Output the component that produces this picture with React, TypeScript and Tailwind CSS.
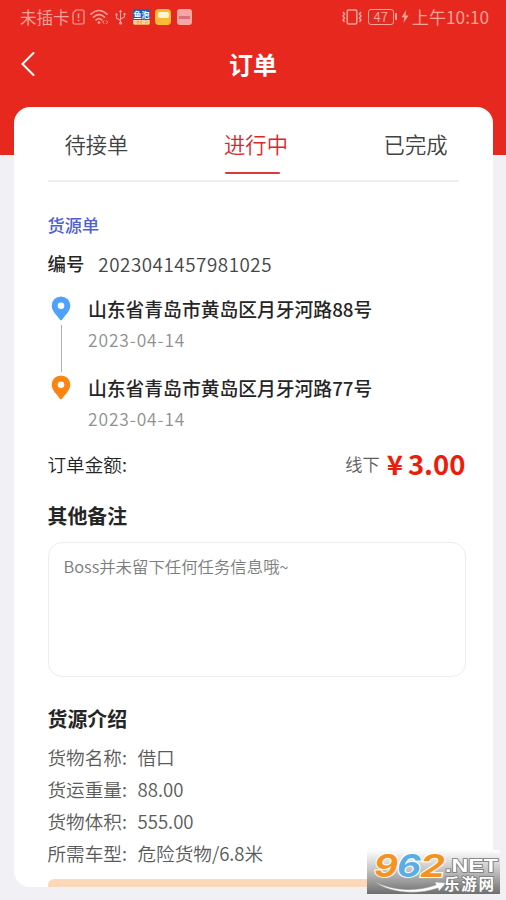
import React from 'react';

type Stop = { address: string; date: string; color: string };
type Detail = { label: string; value: string };

const STOPS: Stop[] = [
  { address: '山东省青岛市黄岛区月牙河路88号', date: '2023-04-14', color: '#4fa2fb' },
  { address: '山东省青岛市黄岛区月牙河路77号', date: '2023-04-14', color: '#fb8412' },
];

const DETAILS: Detail[] = [
  { label: '货物名称:', value: '借口' },
  { label: '货运重量:', value: '88.00' },
  { label: '货物体积:', value: '555.00' },
  { label: '所需车型:', value: '危险货物/6.8米' },
];

const TABS = ['待接单', '进行中', '已完成'];

const SimIcon = () => (
  <svg width="13" height="16" viewBox="0 0 13 16" fill="none" stroke="currentColor" strokeWidth="1.2">
    <path d="M4 1h6.5a1.5 1.5 0 0 1 1.5 1.5v11a1.5 1.5 0 0 1-1.5 1.5h-8A1.5 1.5 0 0 1 1 13.5V4z" />
    <path d="M6.5 4.5v4.8M6.5 10.7v1.6" strokeWidth="1.5" />
  </svg>
);

const WifiIcon = () => (
  <svg width="19" height="16" viewBox="0 0 19 16" fill="none" stroke="currentColor" strokeWidth="1.6" strokeLinecap="round">
    <path d="M1 5.2Q9 -2.2 17 5.2M3.5 8.2Q9 3.2 14.5 8.2M6 11Q9 8.3 12 11" />
    <circle cx="9" cy="13.6" r="1.4" fill="currentColor" stroke="none" />
    <path d="m14 11.8-1.3 1.4L14 14.6M16.4 11.8l1.3 1.4-1.3 1.4" strokeWidth="1" />
  </svg>
);

const UsbIcon = () => (
  <svg width="11" height="16" viewBox="0 0 11 16" fill="none" stroke="currentColor" strokeWidth="1.1">
    <path d="M5.5 2v11M5.5 11.5 1.5 9V6M5.5 10 9.5 8V5" />
    <path d="M3.8 3 5.5.4 7.2 3z" fill="currentColor" stroke="none" />
    <circle cx="5.5" cy="14" r="1.6" fill="currentColor" stroke="none" />
    <path d="M.5 4.5h2v2h-2zM8.5 4h2v2h-2z" fill="currentColor" stroke="none" />
  </svg>
);

const VibrateIcon = () => (
  <svg width="20" height="16" viewBox="0 0 20 16" fill="none" stroke="currentColor" strokeWidth="1.5">
    <rect x="5.2" y="1" width="9.6" height="14" rx="1.5" />
    <path d="m1 3 1.5 2L1 7l1.5 2L1 11l1.5 2M19 3l-1.5 2L19 7l-1.5 2 1.5 2-1.5 2" />
  </svg>
);

const BoltIcon = () => (
  <svg width="8" height="13" viewBox="0 0 8 13" fill="currentColor">
    <path d="M5.2 0 .5 7.3h2.8L2.5 13l5-7.6H4.6z" />
  </svg>
);

const BackIcon = () => (
  <svg width="16" height="26" viewBox="0 0 16 26" fill="none" stroke="currentColor" strokeWidth="2" strokeLinecap="round">
    <path d="M13.5 2 2.5 13l11 11" />
  </svg>
);

const PinIcon = ({ color }: { color: string }) => (
  <svg width="20" height="25" viewBox="0 0 20 25" className="shrink-0">
    <path
      fill={color}
      fillRule="evenodd"
      d="M10 .4a9.3 9.3 0 0 0-9.3 9.3c0 4 2.6 7 5 9.9l3.3 4.1a1.3 1.3 0 0 0 2 0l3.3-4.1c2.4-2.9 5-5.9 5-9.9A9.3 9.3 0 0 0 10 .4zm0 6.1a3.3 3.3 0 1 1 0 6.6 3.3 3.3 0 0 1 0-6.6z"
    />
  </svg>
);

const StatusBar = () => (
  <div className="flex h-[34px] items-center justify-between pr-[17px] pl-5 text-[#f7a39c]">
    <div className="flex items-center">
      <span className="w-[52px] text-[16.5px] whitespace-nowrap">未插卡</span>
      <SimIcon />
      <span className="ml-[5px]"><WifiIcon /></span>
      <span className="ml-[6px]"><UsbIcon /></span>
      <span className="ml-[7px] flex h-4 w-[17px] flex-col overflow-hidden rounded-[2px] bg-[#1765bd] text-center text-white">
        <span className="h-[11px] text-[8px] leading-[11px] font-bold whitespace-nowrap">鱼泡</span>
        <span className="h-[5px] bg-[#f3a456] text-[4px] leading-[5px] whitespace-nowrap">招工找活</span>
      </span>
      <span className="ml-[5px] flex h-4 w-4 justify-center rounded-[4px] bg-[#f9bb37] pt-[3px]">
        <span className="h-[6px] w-[11px] rounded-[2px] bg-[#fff4d2]" />
      </span>
      <span className="ml-[6px] flex h-4 w-[15px] items-center justify-center rounded-[3px] bg-[#f7a5a5]">
        <span className="h-[3px] w-[11px] bg-[#d4747a]" />
      </span>
    </div>
    <div className="flex items-center">
      <VibrateIcon />
      <span className="ml-[6px] flex h-4 w-[26px] items-center justify-center rounded-[3px] border border-current text-[13px] leading-none">47</span>
      <span className="ml-px h-[7px] w-[2px] bg-current" />
      <span className="ml-[4px] mr-[3px]"><BoltIcon /></span>
      <span className="text-[17.2px] whitespace-nowrap">上午10:10</span>
    </div>
  </div>
);

const SiteBadge = () => (
  <div className="absolute top-[850px] left-[367px] h-11 w-[133px]">
    <svg width="133" height="44" viewBox="0 0 133 44" className="overflow-visible">
      <defs>
        <linearGradient id="badge" x1="0" y1="0" x2="0" y2="1">
          <stop offset="0" stopColor="#fff" />
          <stop offset="0.5" stopColor="#bdbdbd" />
          <stop offset="1" stopColor="#6e6e6e" />
        </linearGradient>
      </defs>
      <rect width="133" height="44" fill="url(#badge)" />
      <g
        fontFamily="Inter, sans-serif"
        fontWeight="700"
        fontStyle="italic"
        fontSize="31"
        stroke="#fff"
        strokeWidth="2"
        paintOrder="stroke"
      >
        <text x="7" y="26.5" fill="#f7921e" textLength="24" lengthAdjust="spacingAndGlyphs">9</text>
        <text x="30" y="26.5" fill="#5aaee3" textLength="24" lengthAdjust="spacingAndGlyphs">6</text>
        <text x="53" y="26.5" fill="#f7921e" textLength="25" lengthAdjust="spacingAndGlyphs">2</text>
      </g>
      <path d="M7 31C22 40 47 43 69 35l-1-3 11 1-7 8-1-3C48 46 20 42 7 31z" fill="#fff" stroke="#999" strokeWidth="0.5" />
      <g fill="#fff" stroke="#777" strokeWidth="1.5" paintOrder="stroke" fontWeight="700">
        <text x="78" y="21.5" fontFamily="Liberation Sans, sans-serif" fontSize="18" textLength="53" lengthAdjust="spacingAndGlyphs">.NET</text>
        <text x="77" y="39.5" fontFamily="Noto Sans CJK SC, sans-serif" fontSize="15.5" textLength="50">乐游网</text>
      </g>
    </svg>
  </div>
);

export default function App() {
  return (
    <div className="relative h-[900px] w-[506px] overflow-hidden bg-[#f1f1f5] font-['Noto_Sans_CJK_SC',sans-serif] text-[#252525]">
      <header className="h-[155px] bg-[#e6281f]">
        <StatusBar />
        <div className="grid h-[60px] grid-cols-3 items-center px-4">
          <span className="ml-1 text-white"><BackIcon /></span>
          <h1 className="text-center text-[24px] font-bold text-white">订单</h1>
        </div>
      </header>

      <main className="relative mx-[13.5px] -mt-12 h-[780px] overflow-hidden rounded-[16px] bg-white pr-[27px] pl-[34px]">
        <nav className="mr-[7px] flex h-[75px] justify-between border-b-2 border-[#eeeeee] pr-[11px] pl-[17px]">
          {TABS.map((tab) => (
            <div
              key={tab}
              className={`flex flex-col items-center text-[21.3px] font-[350] ${tab === '进行中' ? 'text-[#d7292a]' : 'text-[#424242]'}`}
            >
              <span className="h-[65px] leading-[74px]">{tab}</span>
              {tab === '进行中' && <span className="mr-[7px] h-[2px] w-[55px] rounded-full bg-[#dc3a3c]" />}
            </div>
          ))}
        </nav>

        <div className="mt-[31px] h-6 text-[17.2px] leading-6 font-medium text-[#4f5fd3]">货源单</div>
        <div className="mt-[13px] flex h-7 items-center">
          <span className="text-[18.4px] font-medium">编号</span>
          <span className="ml-[14px] text-[18.8px] font-[350] tracking-[0.55px] text-[#444444]">2023041457981025</span>
        </div>

        <div className="mt-[18px]">
          {STOPS.map((stop, index) => (
            <div key={stop.address} className="flex h-[79px]">
              <div className="flex w-[27px] flex-col items-center">
                <PinIcon color={stop.color} />
                {index === 0 && <span className="mt-[4px] h-[47px] w-px bg-[#b0b0b0]" />}
              </div>
              <div className="ml-[13.5px] whitespace-nowrap">
                <div className="h-[26px] text-[18.8px] leading-[26px] font-medium">{stop.address}</div>
                <div className="mt-[6px] text-[17.4px] leading-[24px] font-[350] tracking-[0.9px] text-[#909090]">{stop.date}</div>
              </div>
            </div>
          ))}
        </div>

        <div className="-mt-[6px] flex h-8 items-center justify-between text-[18.6px]">
          <span className="font-[350]">订单金额:</span>
          <div className="flex items-center">
            <span className="mr-[7px] text-[17.2px] font-[350] text-[#5c5c5c]">线下</span>
            <span className="mr-[5px] text-[27.5px] font-bold text-[#ed1d0b]">¥</span>
            <span className="text-[27.5px] font-bold text-[#ed1d0b]">3.00</span>
          </div>
        </div>

        <h2 className="mt-5 h-8 text-[19.9px] leading-8 font-bold">其他备注</h2>
        <div className="mt-[10px] h-[135px] w-[418px] rounded-[14px] border-[1.5px] border-[#ededed] px-[15px] pt-[9px] text-[16.4px] leading-7 font-[350] text-[#7c7c7c]">
          Boss并未留下任何任务信息哦~
        </div>

        <h2 className="mt-[26px] h-8 text-[19.9px] leading-8 font-bold">货源介绍</h2>
        <div className="mt-[6px] text-[18.6px] leading-8 font-[350] text-[#5a5a5a]">
          {DETAILS.map((detail) => (
            <div key={detail.label} className="flex h-8">
              <span className="w-[90px]">{detail.label}</span>
              <span>{detail.value}</span>
            </div>
          ))}
        </div>
        <div className="mt-[10px] h-10 w-[418px] rounded-t-[6px] bg-[#fbd9b8]" />
      </main>

      <SiteBadge />
    </div>
  );
}
